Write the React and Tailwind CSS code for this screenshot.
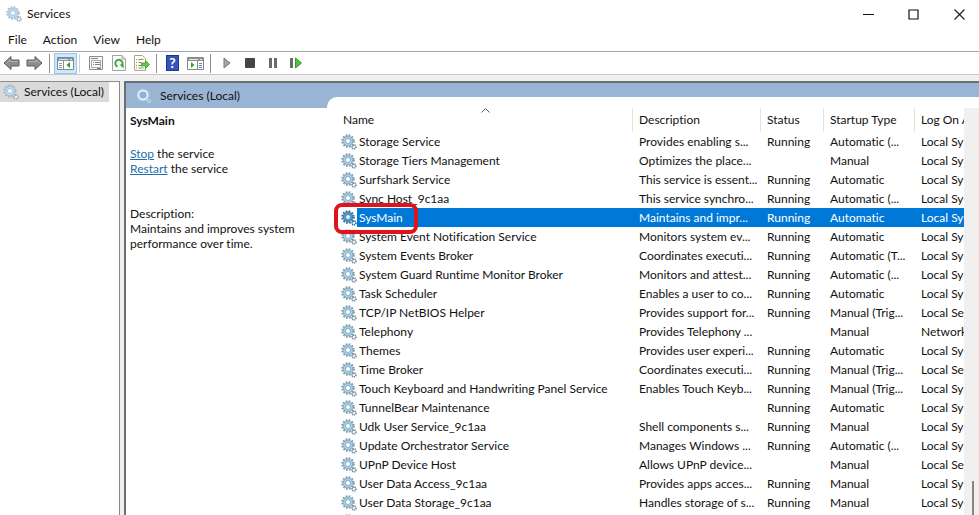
import clsx from "clsx";

const SERVICES = [
  { name: "Storage Service", description: "Provides enabling s...", status: "Running", startup: "Automatic (...", logOn: "Local Sy" },
  { name: "Storage Tiers Management", description: "Optimizes the place...", status: "", startup: "Manual", logOn: "Local Sy" },
  { name: "Surfshark Service", description: "This service is essent...", status: "Running", startup: "Automatic", logOn: "Local Sy" },
  { name: "Sync Host_9c1aa", description: "This service synchro...", status: "Running", startup: "Automatic (...", logOn: "Local Sy" },
  { name: "SysMain", description: "Maintains and impr...", status: "Running", startup: "Automatic", logOn: "Local Sy", selected: true },
  { name: "System Event Notification Service", description: "Monitors system ev...", status: "Running", startup: "Automatic", logOn: "Local Sy" },
  { name: "System Events Broker", description: "Coordinates executi...", status: "Running", startup: "Automatic (T...", logOn: "Local Sy" },
  { name: "System Guard Runtime Monitor Broker", description: "Monitors and attest...", status: "Running", startup: "Automatic (...", logOn: "Local Sy" },
  { name: "Task Scheduler", description: "Enables a user to co...", status: "Running", startup: "Automatic", logOn: "Local Sy" },
  { name: "TCP/IP NetBIOS Helper", description: "Provides support for...", status: "Running", startup: "Manual (Trig...", logOn: "Local Se" },
  { name: "Telephony", description: "Provides Telephony ...", status: "", startup: "Manual", logOn: "Network" },
  { name: "Themes", description: "Provides user experi...", status: "Running", startup: "Automatic", logOn: "Local Sy" },
  { name: "Time Broker", description: "Coordinates executi...", status: "Running", startup: "Manual (Trig...", logOn: "Local Se" },
  { name: "Touch Keyboard and Handwriting Panel Service", description: "Enables Touch Keyb...", status: "Running", startup: "Manual (Trig...", logOn: "Local Sy" },
  { name: "TunnelBear Maintenance", description: "", status: "Running", startup: "Automatic", logOn: "Local Sy" },
  { name: "Udk User Service_9c1aa", description: "Shell components s...", status: "Running", startup: "Manual", logOn: "Local Sy" },
  { name: "Update Orchestrator Service", description: "Manages Windows ...", status: "Running", startup: "Automatic (...", logOn: "Local Sy" },
  { name: "UPnP Device Host", description: "Allows UPnP device...", status: "", startup: "Manual", logOn: "Local Se" },
  { name: "User Data Access_9c1aa", description: "Provides apps acces...", status: "Running", startup: "Manual", logOn: "Local Sy" },
  { name: "User Data Storage_9c1aa", description: "Handles storage of s...", status: "Running", startup: "Manual", logOn: "Local Sy" },
  { name: "", description: "", status: "", startup: "", logOn: "" },
];

const GEAR_COLORS = {
  normal: { teeth: "#7f9cad", body: "#a5cfe6", edge: "#5f8ba6", hole: "#ffffff", small: "#6d8797" },
  light: { teeth: "#a9bccb", body: "#c3dcec", edge: "#7ea9c8", hole: "#ffffff", small: "#8ea6b5" },
  selected: { teeth: "#2f6fa3", body: "#4f9bd0", edge: "#1c5c92", hole: "#e6f2fb", small: "#2a6496" },
};

function GearIcon({ tone = "normal" }) {
  const c = GEAR_COLORS[tone];
  return (
    <svg width="16" height="16" viewBox="0 0 16 16" className="shrink-0" aria-hidden="true">
      <circle cx="7" cy="7" r="5.8" fill="none" stroke={c.teeth} strokeWidth="1.9" strokeDasharray="1.7 1.34" />
      <circle cx="7" cy="7" r="3.8" fill={c.hole} stroke={c.body} strokeWidth="2.4" />
      <circle cx="7" cy="7" r="4.9" fill="none" stroke={c.edge} strokeWidth="0.6" />
      <circle cx="7" cy="7" r="2.5" fill={c.hole} stroke={c.edge} strokeWidth="0.7" />
      <circle cx="13" cy="13" r="1.9" fill="#ffffff" stroke={c.small} strokeWidth="1.7" strokeDasharray="1.1 0.6" />
    </svg>
  );
}

function RingIcon() {
  return (
    <svg width="16" height="16" viewBox="0 0 16 16" className="shrink-0" aria-hidden="true">
      <circle cx="7" cy="7" r="4.6" fill="#8fb0d2" stroke="#e2f1fb" strokeWidth="2" />
      <circle cx="7" cy="7" r="6" fill="none" stroke="#b9d3e8" strokeWidth="0.8" strokeDasharray="1.5 1.2" />
      <circle cx="13" cy="13" r="1.6" fill="none" stroke="#cfe2f0" strokeWidth="1.3" strokeDasharray="1 0.7" />
    </svg>
  );
}

function ArrowIcon({ flip }) {
  return (
    <svg width="17" height="16" viewBox="0 0 17 16" className={clsx(flip && "-scale-x-100")} aria-hidden="true">
      <path d="M1 8 8 1.5V5h8v6H8v3.5Z" fill="#8d8d8d" stroke="#5e5e5e" strokeLinejoin="round" />
      <path d="M3.5 8 7 4.8V6.5h7.5" fill="none" stroke="#b5b5b5" />
    </svg>
  );
}

function TreePaneIcon() {
  return (
    <svg width="17" height="16" viewBox="0 0 17 16" aria-hidden="true">
      <path d="M.5 2.5h16v12H.5Z" fill="#fff" stroke="#7c8a94" />
      <path d="M1 3h15v3H1Z" fill="#8494a0" />
      <path d="M2 4.5h9M13 4.5h2" stroke="#dfe6ea" />
      <path d="M6.5 6v8" stroke="#8494a0" />
      <path d="M2 8.5h3M2 10.5h3M2 12.5h3" stroke="#8aa0b0" />
      <path d="M13 7v6L9.5 10Z" fill="#2e9b2e" />
    </svg>
  );
}

function ActionPaneIcon() {
  return (
    <svg width="17" height="16" viewBox="0 0 17 16" aria-hidden="true">
      <path d="M.5 2.5h16v12H.5Z" fill="#fff" stroke="#85898c" />
      <path d="M1 3h15v3H1Z" fill="#8c9296" />
      <path d="M2 4.5h9M13 4.5h2" stroke="#e5e5e5" />
      <path d="M10.5 6v8" stroke="#85898c" />
      <path d="M12 8.5h3M12 10.5h3M12 12.5h3" stroke="#6f8494" />
      <path d="M4 7v6L7.5 10Z" fill="#2fa336" />
    </svg>
  );
}

function PropertiesIcon() {
  return (
    <svg width="16" height="16" viewBox="0 0 16 16" aria-hidden="true">
      <path d="M1.5 1.5h13v13h-13Z" fill="#f7f7f7" stroke="#8b8b8b" />
      <path d="M3.5 5.5h9v7h-9Z" fill="#fff" stroke="#a8a8a8" />
      <path d="M3 3.5h7M5 7.5h1M7 7.5h5M5 9.5h1M7 9.5h5M9 13.5h4" stroke="#7c858c" />
    </svg>
  );
}

function RefreshIcon() {
  return (
    <svg width="14" height="16" viewBox="0 0 14 16" aria-hidden="true">
      <path d="M.5.5H10L13.5 4v11.5H.5Z" fill="#fbfbfb" stroke="#a3a3a3" />
      <path d="M10 .5V4h3.5" fill="none" stroke="#a3a3a3" />
      <path d="M5.5 11.7a3.6 3.6 0 1 1 4.2-1" fill="none" stroke="#3da63d" strokeWidth="1.9" />
      <path d="M7.5 9.5h4.2v4Z" fill="#3da63d" />
    </svg>
  );
}

function ExportIcon() {
  return (
    <svg width="16" height="16" viewBox="0 0 16 16" aria-hidden="true">
      <path d="M.5.5h8l3 3v12H.5Z" fill="#fffef4" stroke="#aaa68e" />
      <path d="M2 4.5h1M4.5 4.5h5M2 7.5h1M4.5 7.5h3M2 10.5h1M4.5 10.5h3M2 13h1M4.5 13h5" stroke="#8a8a78" />
      <path d="M7.5 8h4V5.5l4 4-4 4V11h-4Z" fill="#69c73c" stroke="#3f9a2d" strokeWidth="0.8" />
    </svg>
  );
}

function HelpIcon() {
  return (
    <span className="flex h-4 w-[13px] items-center justify-center border border-[#20358c] bg-[#3654b5] text-sm leading-4 font-bold text-white">
      ?
    </span>
  );
}

function ShapeIcon({ children }) {
  return (
    <svg width="16" height="16" viewBox="0 0 16 16" aria-hidden="true">
      {children}
    </svg>
  );
}

function ToolButton({ label, active, children }) {
  return (
    <button
      type="button"
      aria-label={label}
      className={clsx(
        "flex h-[21px] w-[23px] shrink-0 items-center justify-center",
        active && "border border-[#90c8ee] bg-[#cde8fa]"
      )}
    >
      {children}
    </button>
  );
}

function Separator() {
  return <span className="mr-1 ml-[3px] h-[19px] w-px shrink-0 bg-[#8f8f8f]" />;
}

function TitleBar() {
  return (
    <header className="flex h-7 items-center pl-1.5">
      <GearIcon tone="light" />
      <h1 className="pl-[5px]">Services</h1>
      <div className="ml-auto flex">
        <button type="button" aria-label="Minimize" className="flex h-7 w-[45px] items-center justify-center">
          <svg width="11" height="11" viewBox="0 0 11 11"><path d="M0 5.5h11" stroke="#111" /></svg>
        </button>
        <button type="button" aria-label="Maximize" className="flex h-7 w-[45px] items-center justify-center">
          <svg width="11" height="11" viewBox="0 0 11 11"><path d="M1 1h9v9H1Z" fill="none" stroke="#111" strokeWidth="1.2" /></svg>
        </button>
        <button type="button" aria-label="Close" className="flex h-7 w-[43px] items-center justify-center pl-1">
          <svg width="11" height="11" viewBox="0 0 11 11"><path d="m.5.5 10 10m0-10-10 10" stroke="#222" strokeWidth="1.2" /></svg>
        </button>
      </div>
    </header>
  );
}

function MenuBar() {
  return (
    <nav className="flex h-6 items-center gap-4 border-b border-[#a5a5a5] pl-2">
      <button type="button">File</button>
      <button type="button">Action</button>
      <button type="button">View</button>
      <button type="button">Help</button>
    </nav>
  );
}

function Toolbar() {
  return (
    <div className="flex h-[23px] items-center border-b border-[#c9c9c9]">
      <ToolButton label="Back"><ArrowIcon /></ToolButton>
      <ToolButton label="Forward"><ArrowIcon flip /></ToolButton>
      <Separator />
      <ToolButton label="Show/Hide Console Tree" active><TreePaneIcon /></ToolButton>
      <span className="mr-1 ml-0.5 h-[19px] w-px bg-[#d0d0d0]" />
      <ToolButton label="Properties"><PropertiesIcon /></ToolButton>
      <ToolButton label="Refresh"><RefreshIcon /></ToolButton>
      <ToolButton label="Export List"><ExportIcon /></ToolButton>
      <Separator />
      <ToolButton label="Help"><HelpIcon /></ToolButton>
      <ToolButton label="Show/Hide Action Pane"><ActionPaneIcon /></ToolButton>
      <Separator />
      <ToolButton label="Start Service">
        <ShapeIcon><path d="M5 3v10l6-5Z" fill="#a5a5a5" stroke="#777" /></ShapeIcon>
      </ToolButton>
      <ToolButton label="Stop Service">
        <ShapeIcon><rect x="3" y="3" width="10" height="10" rx="1" fill="#454545" /></ShapeIcon>
      </ToolButton>
      <ToolButton label="Pause Service">
        <ShapeIcon><path d="M4 3h3v10H4ZM9 3h3v10H9Z" fill="#6a6a6a" /></ShapeIcon>
      </ToolButton>
      <ToolButton label="Restart Service">
        <ShapeIcon>
          <path d="M2 3h3v10H2Z" fill="#6a6a6a" />
          <path d="M7.5 3v10l6-5Z" fill="#4cc43c" stroke="#2f9c2a" />
        </ShapeIcon>
      </ToolButton>
    </div>
  );
}

function DetailPane() {
  return (
    <section className="flex w-[201px] shrink-0 flex-col bg-white">
      <div className="flex h-[25px] shrink-0 items-center bg-[#9ab4d3] pl-2.5">
        <RingIcon />
        <span className="pl-2">Services (Local)</span>
      </div>
      <div className="pt-[5px] pl-1 leading-[15px]">
        <h2 className="font-bold">SysMain</h2>
        <p className="pt-[18px]">
          <a href="#stop" className="text-[#1f6fa8] underline">Stop</a> the service
        </p>
        <p>
          <a href="#restart" className="text-[#1f6fa8] underline">Restart</a> the service
        </p>
        <p className="pt-[30px]">Description:</p>
        <p>
          Maintains and improves system
          <br />
          performance over time.
        </p>
      </div>
    </section>
  );
}

function ServiceRow({ service }) {
  const { name, description, status, startup, logOn, selected } = service;
  const cell = clsx("overflow-hidden p-0 pl-[7px]", selected && "bg-[#0078d7] text-white");

  return (
    <tr className="h-[19px]">
      <td className="relative p-0 pl-3.5">
        <div className="flex h-[19px] items-center">
          <GearIcon tone={selected ? "selected" : "normal"} />
          <span className={clsx("flex-1 pl-0.5 leading-[19px]", selected && "bg-[#0078d7] text-white")}>{name}</span>
        </div>
        {selected && (
          <span className="absolute -top-[5px] left-[7px] z-10 h-[31px] w-[84px] rounded-lg border-4 border-[#e0121c]" />
        )}
      </td>
      <td className={cell}>{description}</td>
      <td className={cell}>{status}</td>
      <td className={cell}>{startup}</td>
      <td className={cell}>{logOn}</td>
    </tr>
  );
}

function ServiceList() {
  const head = "overflow-hidden border-l border-[#e2e2e2] p-0 pl-1.5 text-left font-normal";

  return (
    <section className="flex min-w-0 flex-1 bg-[#9ab4d3] pt-3.5">
      <div className="flex min-w-0 flex-1 rounded-tl-[10px] bg-white pt-[11px]">
        <div className="min-w-0 flex-1 overflow-hidden">
          <table className="w-full table-fixed border-separate border-spacing-0 whitespace-nowrap">
            <colgroup>
              <col className="w-[305px]" />
              <col className="w-32" />
              <col className="w-[63px]" />
              <col className="w-[91px]" />
              <col />
            </colgroup>
            <thead>
              <tr className="h-6">
                <th className="relative p-0 pl-4 text-left font-normal">
                  Name
                  <svg width="9" height="5" viewBox="0 0 9 5" className="absolute top-0 left-[154px]" aria-hidden="true">
                    <path d="m.5 4.5 4-4 4 4" fill="none" stroke="#555" />
                  </svg>
                </th>
                <th className={head}>Description</th>
                <th className={head}>Status</th>
                <th className={head}>Startup Type</th>
                <th className={head}>Log On As</th>
              </tr>
            </thead>
            <tbody>
              {SERVICES.map((service, i) => (
                <ServiceRow key={i} service={service} />
              ))}
            </tbody>
          </table>
        </div>
        <div className="flex w-[15px] shrink-0 flex-col items-end justify-end bg-[#f0f0f0] pr-[5px]">
          <span className="h-[34px] w-0.5 bg-[#868686]" />
        </div>
      </div>
    </section>
  );
}

export default function App() {
  return (
    <div className="flex h-screen flex-col overflow-hidden bg-white font-[Lato,'Open_Sans',sans-serif] text-xs text-[#111111] [font-variant-ligatures:none]">
      <TitleBar />
      <MenuBar />
      <Toolbar />
      <main className="flex min-h-0 flex-1 bg-[#f0f0f0] pt-1.5">
        <aside className="w-[120px] shrink-0 border-t border-r border-[#8a8a8a] bg-white">
          <div className="flex h-5 w-[109px] items-center bg-[#dadada] pl-[3px] whitespace-nowrap">
            <GearIcon tone="light" />
            <span className="pl-[5px]">Services (Local)</span>
          </div>
        </aside>
        <div className="ml-1 flex min-w-0 flex-1 border-t-2 border-l-2 border-[#6b7075]">
          <DetailPane />
          <ServiceList />
        </div>
      </main>
    </div>
  );
}
